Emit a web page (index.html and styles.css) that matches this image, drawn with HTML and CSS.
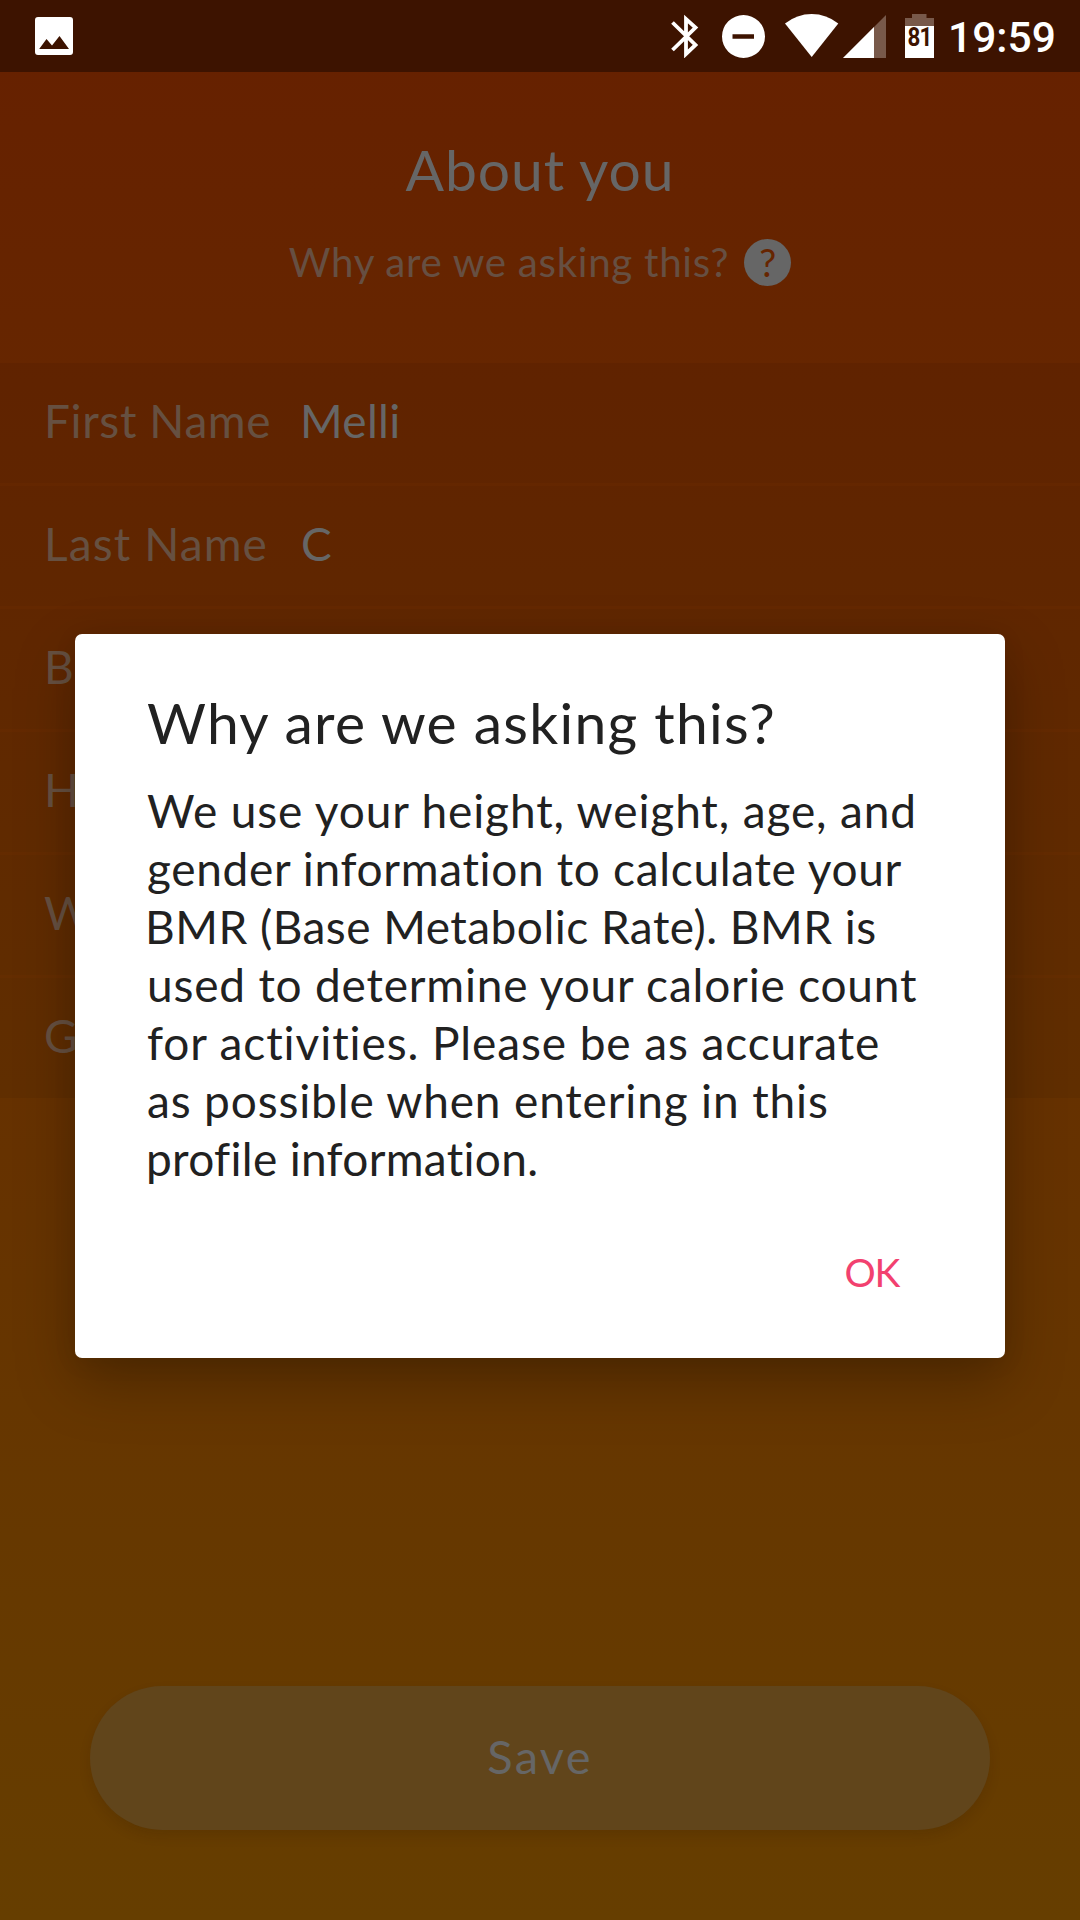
FILE: index.html
```
<!DOCTYPE html>
<html lang="en">
<head>
<meta charset="utf-8">
<title>About you</title>
<link rel="stylesheet" href="styles.css">
</head>
<body>
<div class="screen">
  <div class="status-bar">
    <svg class="icon-photo" width="38" height="38" viewBox="0 0 38 38"><path fill="#fff" fill-rule="evenodd" d="M3 0H35Q38 0 38 3V35Q38 38 35 38H3Q0 38 0 35V3Q0 0 3 0ZM4.200 32H34L24.500 19L17 28.500L11.500 22Z"/></svg>
    <svg class="icon-bluetooth" width="28" height="44" viewBox="0 0 28 44"><path fill="none" stroke="#fff" stroke-width="3.800" d="M1.500 8.500L24.500 31L15 40V5L24.500 13.500L1.500 36"/></svg>
    <svg class="icon-dnd" width="44" height="44" viewBox="0 0 44 44"><path fill="#fff" fill-rule="evenodd" d="M21.500 1A21.500 21.500 0 1 1 21.500 44A21.500 21.500 0 1 1 21.500 1ZM10.500 20.200V24.800H32V20.200Z"/></svg>
    <svg class="icon-wifi" width="54" height="44" viewBox="0 0 54 44"><path fill="#fff" d="M0 9.500Q12 0 26.700 0T53.300 9.500L26.700 43Z"/></svg>
    <svg class="icon-signal" width="43" height="43" viewBox="0 0 43 43"><path fill="#78594a" d="M43 0V43H0Z"/><path fill="#fff" d="M31 12V43H0Z"/></svg>
    <div class="battery">
      <svg width="29" height="44" viewBox="0 0 29 44"><path fill="#78594a" d="M7 0H21.500V4H29V12H0V4H7Z"/><path fill="#fff" d="M0 12H29V44H0Z"/></svg>
      <span class="battery-level">81</span>
    </div>
    <span class="clock">19:59</span>
  </div>

  <div class="header">
    <h1 class="title">About you</h1>
    <div class="subtitle">
      <span class="subtitle-text">Why are we asking this?</span>
      <span class="help">?</span>
    </div>
  </div>

  <div class="form">
    <div class="row"><span class="label">First Name</span><span class="value">Melli</span></div>
    <div class="row"><span class="label last-name">Last Name</span><span class="value initial">C</span></div>
    <div class="row"><span class="label">B</span></div>
    <div class="row"><span class="label">H</span></div>
    <div class="row"><span class="label">W</span></div>
    <div class="row"><span class="label">G</span></div>
  </div>

  <div class="save">Save</div>

  <div class="dialog">
    <h2 class="dialog-title">Why are we asking this?</h2>
    <p class="dialog-text">
      <span class="line l1">We use your height, weight, age, and</span>
      <span class="line l2">gender information to calculate your</span>
      <span class="line l3">BMR (Base Metabolic Rate). BMR is</span>
      <span class="line l4">used to determine your calorie count</span>
      <span class="line l5">for activities. Please be as accurate</span>
      <span class="line l6">as possible when entering in this</span>
      <span class="line l7">profile information.</span>
    </p>
    <div class="dialog-ok">OK</div>
  </div>
</div>
</body>
</html>
```
FILE: styles.css
```
* { box-sizing: border-box; }

body {
  margin: 0;
  font-family: Lato, "Open Sans", sans-serif;
}

.screen {
  position: relative;
  display: flex;
  flex-direction: column;
  width: 1080px;
  height: 1920px;
  overflow: hidden;
  background: linear-gradient(#662000 0, #663e00 100%);
}

.status-bar {
  display: flex;
  flex: none;
  align-items: flex-start;
  height: 72px;
  padding: 14px 27px 0 35px;
  background: #3d1300;
}

.icon-photo { margin: 3px auto 0 0; }
.icon-bluetooth { margin-right: 23px; }
.icon-dnd { margin-right: 19px; }
.icon-wifi { margin-right: 4px; }
.icon-signal { margin: 1px 19px 0 0; }

.battery {
  position: relative;
  width: 29px;
  height: 44px;
  margin-right: 14px;
}

.battery-level {
  position: absolute;
  inset: 10px 0 auto;
  color: #3d1300;
  font: 700 26px/26px Roboto, sans-serif;
  letter-spacing: -1px;
  text-align: center;
  transform: scaleX(.86);
}

.clock {
  width: 105px;
  color: #fff;
  font: 500 42.500px/48px Roboto, sans-serif;
  white-space: nowrap;
}

.header {
  flex: none;
  height: 291px;
  padding-top: 64px;
}

.title {
  margin: 0 0 35px;
  color: #666;
  font-size: 57px;
  font-weight: 400;
  line-height: 66px;
  letter-spacing: .900px;
  text-align: center;
}

.subtitle {
  display: flex;
  align-items: center;
  justify-content: center;
  gap: 15px;
  height: 50px;
}

.subtitle-text {
  color: #664f42;
  font-size: 40.300px;
  line-height: 50px;
  letter-spacing: .700px;
}

.help {
  width: 47px;
  height: 47px;
  border-radius: 50%;
  background: #666;
  color: #662500;
  font-size: 38px;
  line-height: 47px;
  text-align: center;
}

.form {
  flex: none;
  height: 735px;
  background: rgba(0, 0, 0, .055);
}

.row {
  display: flex;
  height: 123px;
  padding: 0 44px;
  border-bottom: 3px solid rgba(124, 48, 0, .18);
  font-size: 46px;
  line-height: 115px;
}

.row:last-child { border-bottom: 0; }

.label {
  width: 256px;
  color: #665041;
  letter-spacing: .600px;
}

.last-name { letter-spacing: 1.100px; }

.value {
  color: #666;
  letter-spacing: .300px;
}

.initial { margin-left: 1px; }

.save {
  flex: none;
  width: 900px;
  height: 144px;
  margin: 588px auto 0;
  border-radius: 72px;
  background: #61451b;
  box-shadow: 0 6px 12px rgba(40, 20, 0, .14);
  color: #666;
  font-size: 47px;
  line-height: 141px;
  letter-spacing: 2.300px;
  text-align: center;
}

.dialog {
  position: absolute;
  top: 634px;
  left: 75px;
  width: 930px;
  height: 724px;
  padding: 55px 73px 0 72px;
  border-radius: 7px;
  background: #fff;
  box-shadow: 0 24px 60px rgba(0, 0, 0, .26), 0 4px 24px rgba(0, 0, 0, .07);
  color: #212121;
}

.dialog-title {
  margin: 0 0 27px;
  font-size: 57px;
  font-weight: 400;
  line-height: 66px;
  letter-spacing: 1.260px;
}

.dialog-text {
  margin: 0;
  font-size: 46px;
  line-height: 58px;
}

.line {
  display: block;
  white-space: nowrap;
}

.l1 { letter-spacing: .880px; }
.l2 { letter-spacing: .670px; }
.l3 { letter-spacing: .470px; margin-left: -2px; }
.l4 { letter-spacing: .800px; }
.l5 { letter-spacing: .900px; }
.l6 { letter-spacing: .850px; }
.l7 { letter-spacing: .300px; margin-left: -1px; }

.dialog-ok {
  margin: 60px 33px 0 0;
  color: #f2416f;
  font-size: 39px;
  line-height: 48px;
  letter-spacing: -1.300px;
  text-align: right;
}
```
